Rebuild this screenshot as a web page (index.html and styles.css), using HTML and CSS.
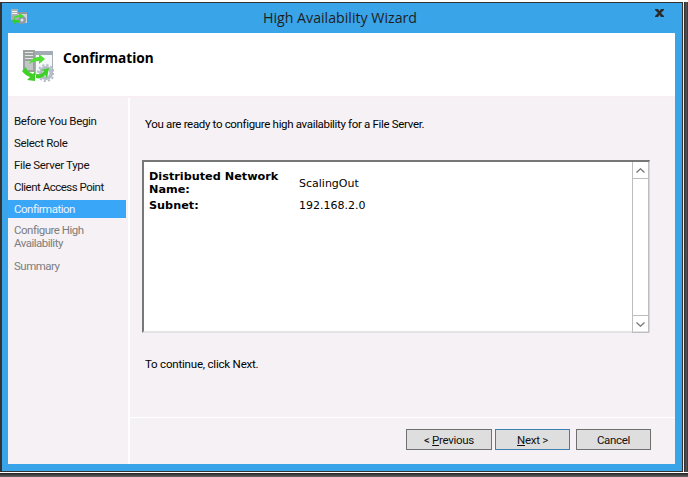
FILE: index.html
```html
<!DOCTYPE html>
<html lang="en">
<head>
<meta charset="utf-8">
<title>High Availability Wizard</title>
<link rel="stylesheet" href="styles.css">
</head>
<body>
<div class="screen">
  <div class="top-row">
    <div class="window">
      <div class="titlebar">
        <svg class="title-icon" viewBox="0 0 16 16" width="16" height="16">
          <rect x="0" y="0" width="7" height="11" fill="#aab0ae"/>
          <rect x="1" y="2" width="5" height="1" fill="#f4f4f4"/>
          <rect x="1" y="4" width="5" height="1" fill="#f4f4f4"/>
          <rect x="7" y="3" width="9" height="11" fill="#cdd3d8"/>
          <rect x="7" y="3" width="9" height="2" fill="#8f98a2"/>
          <circle cx="11" cy="11" r="4" fill="#8f9aa6"/>
          <circle cx="11" cy="11" r="1.5" fill="#dfe6ea"/>
          <path d="M2 8 L8 6 L8 4 L13 7 L8 10 L8 8 L4 9Z" fill="#3fe02c"/>
          <path d="M1 12 L4 9 L4 11 L8 11 L8 14 L4 13 L4 15Z" fill="#35cf25"/>
        </svg>
        <span class="title-text">High Availability Wizard</span>
        <svg class="close-icon" viewBox="0 0 9 8" width="9" height="8">
          <path d="M0 0H3L4.5 2L6 0H9V1L6 4L9 7V8H6L4.5 6L3 8H0V7L3 4L0 1Z" fill="#2b2b2b"/>
        </svg>
      </div>
      <div class="client">
        <header class="header">
          <svg class="header-icon" viewBox="0 0 32 32" width="32" height="32">
            <rect x="1" y="0" width="12" height="22" fill="#9aa19e"/>
            <rect x="3" y="2" width="8" height="1" fill="#e4e8e6"/>
            <rect x="3" y="5" width="8" height="1" fill="#e4e8e6"/>
            <rect x="3" y="8" width="8" height="1" fill="#e4e8e6"/>
            <rect x="3" y="11" width="8" height="9" fill="#c0c6c3"/>
            <rect x="13.5" y="1.5" width="17" height="23" fill="#f6f7f8" stroke="#a9b0b8"/>
            <rect x="13" y="1" width="18" height="4" fill="#a3abb4"/>
            <circle cx="24" cy="23" r="7" fill="#b3bdc8"/>
            <circle cx="24" cy="23" r="8" fill="none" stroke="#b3bdc8" stroke-width="2" stroke-dasharray="2.2 2"/>
            <circle cx="24" cy="23" r="3.5" fill="#eef2f5"/>
            <path d="M7 14 C9 9 13 7 17 7 L17 4 L23 9 L17 14 L17 11 C13 11 10 12 7 14Z" fill="#4fe033"/>
            <path d="M0 21 L4 17 C5 21 8 23 11 24 L13 21 L13 31 L5 30 L8 27 C5 26 2 24 0 21Z" fill="#3fd028"/>
            <path d="M14 24 C17 25 20 24 22 21 L19 20 L27 18 L25 28 L23 25 C20 28 17 29 14 28Z" fill="#3fd028"/>
          </svg>
          <h1 class="header-title">Confirmation</h1>
        </header>
        <div class="body-area">
          <nav class="sidebar">
            <div class="step step-tight">Before You Begin</div>
            <div class="step step-tight">Select Role</div>
            <div class="step step-tight">File Server Type</div>
            <div class="step step-tighter">Client Access Point</div>
            <div class="step step-tighter step-active">Confirmation</div>
            <div class="step step-tighter step-muted step-wrap">Configure High Availability</div>
            <div class="step step-tighter step-muted">Summary</div>
          </nav>
          <main class="main">
            <div class="main-top">
              <p class="intro">You are ready to configure high availability for a File Server.</p>
              <div class="report">
                <div class="report-body">
                  <div class="report-grid">
                    <div class="key">Distributed Network Name:</div>
                    <div class="val">ScalingOut</div>
                    <div class="key">Subnet:</div>
                    <div class="val val-top">192.168.2.0</div>
                  </div>
                </div>
                <div class="scrollbar">
                  <div class="scroll-btn">
                    <svg viewBox="0 0 9 5" width="9" height="5"><path d="M0.5 4.5L4.5 0.8L8.5 4.5" fill="none" stroke="#777" stroke-width="1.3"/></svg>
                  </div>
                  <div class="scroll-track"></div>
                  <div class="scroll-btn scroll-btn-down">
                    <svg viewBox="0 0 9 5" width="9" height="5"><path d="M0.5 0.5L4.5 4.2L8.5 0.5" fill="none" stroke="#777" stroke-width="1.3"/></svg>
                  </div>
                </div>
              </div>
              <p class="continue">To continue, click Next.</p>
            </div>
            <footer class="footer">
              <button class="btn btn-prev" type="button">&lt; <u>P</u>revious</button>
              <button class="btn btn-next" type="button"><u>N</u>ext &gt;</button>
              <button class="btn btn-cancel" type="button">Cancel</button>
            </footer>
          </main>
        </div>
      </div>
    </div>
    <div class="gap-v"></div>
    <div class="shadow-v"></div>
  </div>
  <div class="gap-h"></div>
  <div class="shadow-h"></div>
</div>
</body>
</html>
```
FILE: styles.css
```css
html, body {
  margin: 0;
  padding: 0;
  background: #fff;
}
.screen {
  width: 688px;
  height: 477px;
  overflow: hidden;
  display: flex;
  flex-direction: column;
  padding-top: 2px;
  box-sizing: border-box;
  font-family: "Roboto", "Open Sans", sans-serif;
  font-size: 11.5px;
  letter-spacing: -0.2px;
  color: #000;
}
.top-row {
  display: flex;
  height: 470px;
}
.window {
  width: 683px;
  box-sizing: border-box;
  border: 1px solid #333;
  border-left-width: 2px;
  background: #39a4e8;
  display: flex;
  flex-direction: column;
  padding: 0 7px 7px 6px;
}
.gap-v { width: 1px; background: #f0f0f0; }
.shadow-v {
  width: 4px;
  background: linear-gradient(to right, #2b2b2b, #555 60%, #333);
}
.gap-h { height: 1px; background: #fff; }
.shadow-h {
  height: 4px;
  background: linear-gradient(to bottom, #222, #666);
}
.titlebar {
  height: 30px;
  flex: none;
  display: flex;
  align-items: center;
  position: relative;
  justify-content: center;
  color: #1e1e1e;
}
.title-icon {
  position: absolute;
  left: 3px;
  top: 6px;
}
.title-text {
  font-family: "Open Sans", sans-serif;
  font-size: 14.2px;
  letter-spacing: 0;
  line-height: 20px;
  padding: 0 3px 0 0;
}
.close-icon {
  position: absolute;
  right: 11px;
  top: 6px;
}
.client {
  flex: 1;
  display: flex;
  flex-direction: column;
  background: #f5f1f5;
  min-height: 0;
}
.header {
  height: 63px;
  flex: none;
  box-sizing: border-box;
  background: #fff;
  display: flex;
  align-items: flex-start;
  padding: 17px 0 0 14px;
}
.header-title {
  margin: -1px 0 0 9px;
  font-family: "Noto Sans", sans-serif;
  font-size: 13.7px;
  letter-spacing: 0;
  line-height: 18px;
  font-weight: 700;
  color: #000;
}
.header-icon { flex: none; }
.body-area {
  flex: 1;
  display: flex;
  min-height: 0;
  border-top: 2px solid #f7eff5;
}
.sidebar {
  width: 120px;
  flex: none;
  border-right: 2px solid #fff;
  padding-top: 12px;
  display: flex;
  flex-direction: column;
}
.step {
  width: 118px;
  height: 22px;
  box-sizing: border-box;
  line-height: 18px;
  padding: 2px 0 2px 6px;
  color: #111;
}
.step-tight { letter-spacing: -0.32px; }
.step-tighter { letter-spacing: -0.5px; }
.step-active {
  background: #3aa6f8;
  color: #eaf5ff;
  height: 18px;
  padding-top: 0;
  padding-bottom: 0;
  margin: 2px 0;
}
.step-muted { color: #7d7d7d; }
.step-wrap {
  height: 35px;
  line-height: 13px;
  padding-top: 4px;
  padding-right: 10px;
}
.main {
  flex: 1;
  min-width: 0;
  display: flex;
  flex-direction: column;
}
.main-top {
  flex: 1;
  min-height: 0;
  padding: 0 25px 0 12px;
  border-bottom: 1px solid #fff;
}
.intro {
  margin: 18px 0 0 3px;
  line-height: 16px;
  letter-spacing: -0.33px;
}
.report {
  margin-top: 28px;
  height: 173px;
  box-sizing: border-box;
  background: #fff;
  border: 2px solid #777;
  border-right: 1px solid #d8d8d8;
  border-bottom: 2px solid #e4e4e4;
  display: flex;
}
.report-body {
  flex: 1;
  min-width: 0;
  padding: 8px 0 0 5px;
}
.report-grid {
  display: grid;
  grid-template-columns: 150px 1fr;
  font-family: "DejaVu Sans", Verdana, sans-serif;
  font-size: 11px;
  letter-spacing: 0;
  line-height: 13px;
}
.key {
  font-weight: 700;
  font-size: 11.25px;
  padding-bottom: 3px;
  width: 135px;
}
.val { align-self: center; padding-bottom: 3px; }
.val-top { align-self: start; }
.scrollbar {
  width: 17px;
  flex: none;
  display: flex;
  flex-direction: column;
  border-left: 1px solid #bdbdbd;
  border-right: 1px solid #bdbdbd;
  margin-bottom: -2px;
  border-bottom: 1px solid #bdbdbd;
  box-sizing: border-box;
}
.scroll-btn {
  height: 17px;
  flex: none;
  display: flex;
  align-items: center;
  justify-content: center;
  border-bottom: 1px solid #bdbdbd;
  box-sizing: border-box;
}
.scroll-btn-down {
  border-bottom: 0;
  border-top: 1px solid #bdbdbd;
}
.scroll-track { flex: 1; }
.continue {
  margin: 23px 0 0 3px;
  line-height: 16px;
}
.footer {
  height: 46px;
  flex: none;
  box-sizing: border-box;
  display: flex;
  padding: 11px 24px 0 276px;
}
.btn {
  height: 21px;
  box-sizing: border-box;
  background: #dedede;
  border: 1px solid #707070;
  font: inherit;
  letter-spacing: -0.3px;
  line-height: 17px;
  color: #111;
  padding: 1px 0 0;
}
.btn-prev { width: 86px; }
.btn-next {
  width: 75px;
  margin-left: 3px;
  border-color: #3c7fb1;
}
.btn-cancel {
  width: 75px;
  margin-left: 6px;
}
```
